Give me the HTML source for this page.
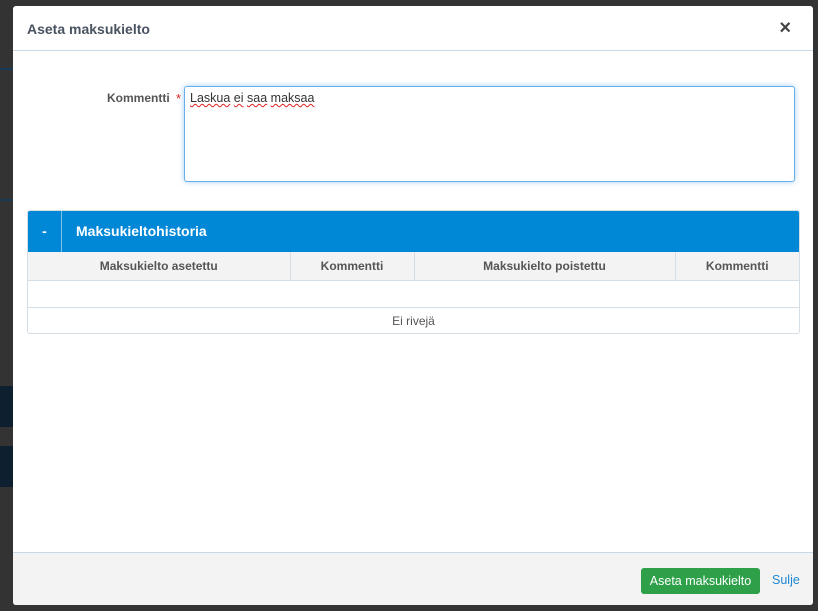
<!DOCTYPE html>
<html><head><meta charset="utf-8"><style>
*{box-sizing:border-box;margin:0;padding:0}
body{width:818px;height:611px;background:#333;position:relative;overflow:hidden;font-family:"Liberation Sans",Arial,sans-serif}
.bg{position:absolute;left:0;width:13px}
.modal{position:absolute;left:13px;top:6px;width:800px;height:599px;background:#fff;border-radius:3px;overflow:hidden}
.hdr{height:45px;border-bottom:1px solid #c7d8e6;position:relative}
.hdr h4{position:absolute;left:14px;top:15px;font-size:14px;font-weight:bold;color:#4a5360}
.x{position:absolute;right:22px;top:11px;font-size:20px;font-weight:bold;color:#444}
.lbl{position:absolute;left:94px;top:85px;font-size:12px;font-weight:bold;color:#555}
.star{position:absolute;left:163px;top:85px;color:#e02020;font-size:13px}
.ta{position:absolute;left:171px;top:80px;width:611px;height:96px;border:1px solid #66afe9;border-radius:3px;box-shadow:0 0 6px rgba(102,175,233,.6);padding:4px 5px;font-size:12.5px;color:#333}
.ta span{text-decoration:underline wavy #e02020;text-decoration-thickness:1px}
.panel{position:absolute;left:14px;top:204px;width:773px;height:124px;border:1px solid #d5dde5;border-radius:3px;overflow:hidden}
.ph{height:41px;background:#0088d7;position:relative;color:#fff;font-weight:bold}
.ph .d{position:absolute;left:0;top:0;width:34px;height:41px;border-right:1px solid #7cc3ee;text-align:center;line-height:41px;font-size:14px}
.ph .t{position:absolute;left:48px;top:12px;font-size:14px}
table{border-collapse:collapse;width:100%;font-size:12px}
th{background:#f3f3f3;color:#555;height:28px;border-right:1px solid #d5dde5;border-bottom:1px solid #d5dde5;font-weight:bold}
th:last-child{border-right:none}
td{height:27px;border-bottom:1px solid #d5dde5;text-align:center;color:#555}
.ftr{position:absolute;left:0;top:546px;width:800px;height:53px;background:#f3f3f3;border-top:1px solid #c7d8e6}
.btn{position:absolute;left:628px;top:15px;width:119px;height:26px;background:#2ea04a;border-radius:3px;color:#fff;font-size:12.5px;text-align:center;line-height:26px}
.lnk{position:absolute;left:759px;top:20px;color:#1e88d4;font-size:12.5px}
</style></head><body>
<div class="bg" style="top:68px;height:2px;background:#1a3a5a"></div>
<div class="bg" style="top:199px;height:2px;background:#1a3a5a"></div>
<div class="bg" style="top:386px;height:41px;background:#0e1f30"></div>
<div class="bg" style="top:446px;height:41px;background:#0e1f30"></div>
<div class="modal">
<div class="hdr"><h4>Aseta maksukielto</h4><div class="x">×</div></div>
<div class="lbl">Kommentti</div><div class="star">*</div>
<div class="ta"><span>Laskua</span> <span>ei</span> <span>saa</span> <span>maksaa</span></div>
<div class="panel">
<div class="ph"><div class="d">-</div><div class="t">Maksukieltohistoria</div></div>
<table><tr><th style="width:262px">Maksukielto asetettu</th><th style="width:124px">Kommentti</th><th style="width:261px">Maksukielto poistettu</th><th>Kommentti</th></tr>
<tr><td colspan="4"></td></tr><tr><td colspan="4" style="border:none">Ei rivejä</td></tr></table>
</div>
<div class="ftr"><div class="btn">Aseta maksukielto</div><div class="lnk">Sulje</div></div>
</div>
</body></html>
